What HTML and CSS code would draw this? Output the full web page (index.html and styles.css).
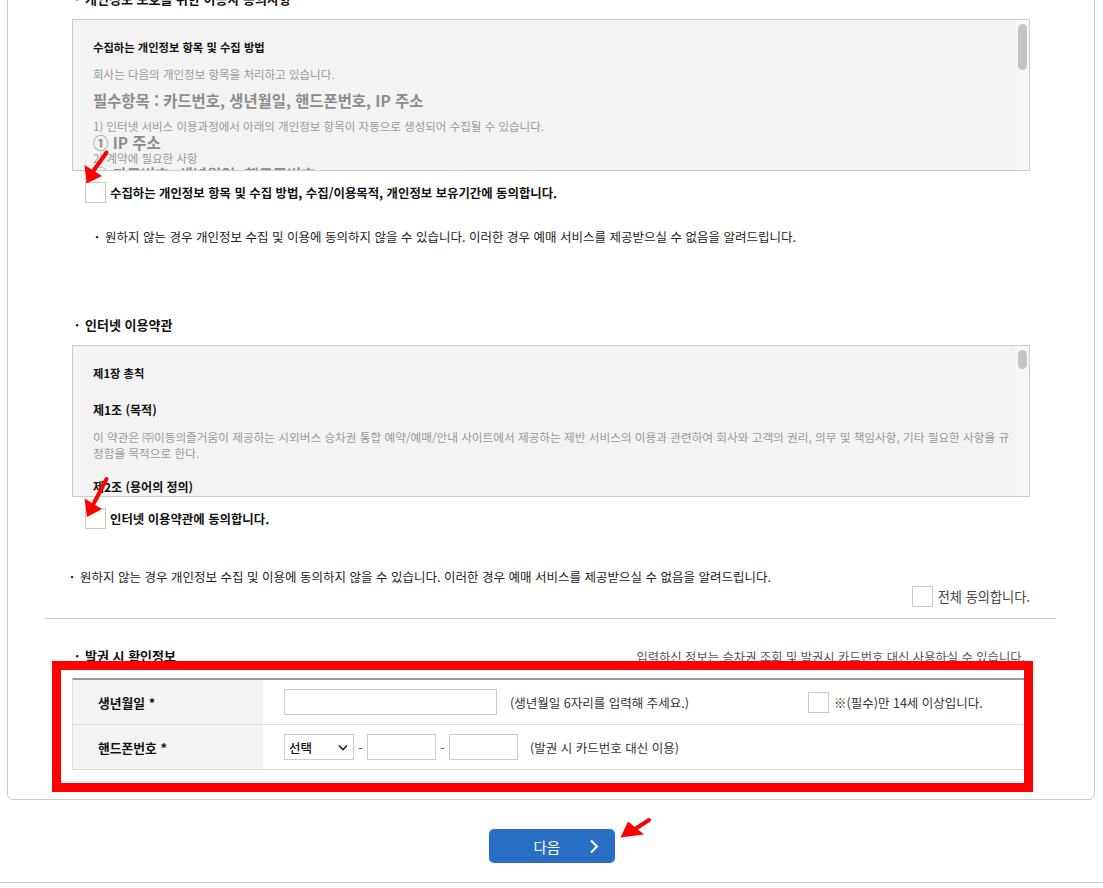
FILE: index.html
```html
<!DOCTYPE html>
<html lang="ko">
<head>
    <meta charset="UTF-8">
    <meta name="viewport" content="width=device-width, initial-scale=1.0">
    <link rel="stylesheet" href="styles.css">
    <title>약관 동의 및 발권 정보 입력</title>
</head>
<body>
    <div class="panel">
        <h3 class="sec-title"><span class="dot">·</span>개인정보 보호를 위한 이용자 동의사항</h3>

        <!-- 개인정보 수집 약관 -->
        <div class="terms-box">
            <div class="terms-text">
                <h4>수집하는 개인정보 항목 및 수집 방법</h4>
                <p class="first">회사는 다음의 개인정보 항목을 처리하고 있습니다.</p>
                <p class="big">필수항목 : 카드번호, 생년월일, 핸드폰번호, IP 주소</p>
                <p class="first-sm">1) 인터넷 서비스 이용과정에서 아래의 개인정보 항목이 자동으로 생성되어 수집될 수 있습니다.</p>
                <p class="item">① IP 주소</p>
                <p>2) 계약에 필요한 사항</p>
                <p class="item">② 카드번호, 생년월일, 핸드폰번호</p>
                <p>3) 수집방법 : 홈페이지 예매 화면</p>
            </div>
            <div class="scrollbar"><span class="thumb thumb-long"></span></div>
        </div>
        <div class="agree-row">
            <span class="chk-wrap">
                <span class="chk"></span>
                <svg class="arrow arrow-1" width="24" height="34" viewBox="0 0 24 34">
                    <path d="M2.5 32.5 L0.5 14 L18 25 Z" fill="#f00"/>
                    <path d="M10 19 L22.5 1.5" stroke="#f00" stroke-width="4" stroke-linecap="round"/>
                </svg>
            </span>
            <b>수집하는 개인정보 항목 및 수집 방법, 수집/이용목적, 개인정보 보유기간에 동의합니다.</b>
        </div>
        <p class="notice notice-1"><span class="dot">·</span>원하지 않는 경우 개인정보 수집 및 이용에 동의하지 않을 수 있습니다. 이러한 경우 예매 서비스를 제공받으실 수 없음을 알려드립니다.</p>

        <h3 class="sec-title terms-title"><span class="dot">·</span>인터넷 이용약관</h3>

        <!-- 인터넷 이용약관 -->
        <div class="terms-box">
            <div class="terms-text">
                <h4>제1장 총칙</h4>
                <h4 class="article">제1조 (목적)</h4>
                <p class="first article-text">이 약관은 ㈜이동의즐거움이 제공하는 시외버스 승차권 통합 예약/예매/안내 사이트에서 제공하는 제반 서비스의 이용과 관련하여 회사와 고객의 권리, 의무 및 책임사항, 기타 필요한 사항을 규정함을 목적으로 한다.</p>
                <h4 class="article article-2">제2조 (용어의 정의)</h4>
                <p>이 약관에서 사용하는 용어의 정의는 다음과 같다.</p>
            </div>
            <div class="scrollbar"><span class="thumb thumb-short"></span></div>
        </div>
        <div class="agree-row">
            <span class="chk-wrap">
                <span class="chk"></span>
                <svg class="arrow arrow-2" width="24" height="42" viewBox="0 0 24 42">
                    <path d="M3 40 L0.5 21.5 L18 32 Z" fill="#f00"/>
                    <path d="M10 26 L22.5 2" stroke="#f00" stroke-width="4" stroke-linecap="round"/>
                </svg>
            </span>
            <b>인터넷 이용약관에 동의합니다.</b>
        </div>
        <p class="notice notice-2"><span class="dot">·</span>원하지 않는 경우 개인정보 수집 및 이용에 동의하지 않을 수 있습니다. 이러한 경우 예매 서비스를 제공받으실 수 없음을 알려드립니다.</p>

        <div class="all-agree">
            <span class="chk"></span>
            <span>전체 동의합니다.</span>
        </div>

        <hr class="divider">

        <div class="sec-head">
            <h3 class="sec-title"><span class="dot">·</span>발권 시 확인정보</h3>
            <span class="sec-note">입력하신 정보는 승차권 조회 및 발권시 카드번호 대신 사용하실 수 있습니다.</span>
        </div>

        <!-- 발권 확인정보 입력 -->
        <div class="confirm-area">
            <div class="info-table">
                <div class="info-row">
                    <div class="info-label">생년월일 *</div>
                    <div class="info-field">
                        <input type="text" class="inp-birth">
                        <span class="hint hint-birth">(생년월일 6자리를 입력해 주세요.)</span>
                        <span class="chk"></span>
                        <span class="age-text">※(필수)만 14세 이상입니다.</span>
                    </div>
                </div>
                <div class="info-row">
                    <div class="info-label">핸드폰번호 *</div>
                    <div class="info-field">
                        <span class="select-wrap">
                            <select class="sel-phone">
                                <option>선택</option>
                                <option>010</option>
                                <option>011</option>
                                <option>016</option>
                                <option>017</option>
                                <option>019</option>
                            </select>
                            <svg class="sel-arrow" width="10" height="7" viewBox="0 0 10 7">
                                <polyline points="1,1.5 5,5.5 9,1.5" fill="none" stroke="#222" stroke-width="1.6"/>
                            </svg>
                        </span>
                        <span class="dash">-</span>
                        <input type="text" class="inp-phone">
                        <span class="dash">-</span>
                        <input type="text" class="inp-phone">
                        <span class="hint hint-phone">(발권 시 카드번호 대신 이용)</span>
                    </div>
                </div>
            </div>
            <div class="highlight"></div>
        </div>
    </div>

    <div class="btn-area">
        <a href="#" class="btn-next">
            <span>다음</span>
            <svg width="10" height="15" viewBox="0 0 10 15">
                <polyline points="2,1.5 8,7.5 2,13.5" fill="none" stroke="#fff" stroke-width="2"/>
            </svg>
        </a>
        <svg class="arrow arrow-3" width="32" height="22" viewBox="0 0 32 22">
            <path d="M1.5 19.5 L9 3.5 L25 16.5 Z" fill="#f00"/>
            <path d="M16 11 L30 2" stroke="#f00" stroke-width="4" stroke-linecap="round"/>
        </svg>
    </div>
    <div class="footer-line"></div>
</body>
</html>
```

FILE: styles.css
```css
* {
    box-sizing: border-box;
}
body {
    margin: 0;
    background-color: #fff;
    font-family: "Noto Sans CJK KR", "Noto Sans", sans-serif;
    font-size: 12.5px;
    color: #333;
}
p, h3, h4 {
    margin: 0;
}

/* 바깥 패널 */
.panel {
    margin: -40px 8px 0 7px;
    padding: 29px 0 29px;
    border: 1px solid #ccc;
    border-radius: 0 0 6px 6px;
}
.sec-title {
    padding-left: 67px;
    font-size: 13px;
    line-height: 18px;
    font-weight: bold;
    color: #111;
}
.dot {
    display: inline-block;
    width: 10px;
    font-weight: bold;
}

/* 약관 스크롤 박스 */
.terms-box {
    position: relative;
    height: 152px;
    margin: 11px 64px 0;
    border: 1px solid #ccc;
    background-color: #f3f3f3;
    overflow: hidden;
}
.terms-text {
    padding: 19px 16px 0 20px;
    font-size: 11.5px;
    line-height: 16px;
    color: #999;
}
.terms-text h4 {
    font-size: 11.3px;
    line-height: 16px;
    font-weight: bold;
    color: #111;
}
.terms-text h4.article {
    margin-top: 21px;
    font-size: 12px;
}
.terms-text h4.article-2 {
    margin-top: 18px;
}
.terms-text .first {
    margin-top: 11px;
}
.terms-text .article-text {
    font-size: 11.65px;
}
.terms-text .big {
    margin-top: 8px;
    font-size: 15.4px;
    line-height: 20px;
    font-weight: bold;
    color: #8c8c8c;
}
.terms-text .first-sm {
    margin-top: 8px;
}
.terms-text .item {
    font-size: 15.4px;
    font-weight: bold;
    color: #8c8c8c;
}
.scrollbar {
    position: absolute;
    top: 0;
    right: 0;
    bottom: 0;
    width: 14px;
    background-color: #f7f7f7;
}
.thumb {
    display: block;
    width: 9px;
    margin: 4px 0 0 3px;
    background-color: #c4c4c4;
    border-radius: 5px;
}
.thumb-long {
    height: 46px;
}
.thumb-short {
    height: 19px;
}

/* 체크박스 */
.chk {
    display: inline-block;
    width: 21px;
    height: 21px;
    border: 1px solid #c9c9c9;
    background-color: #fff;
    flex-shrink: 0;
}
.chk-wrap {
    position: relative;
    display: inline-flex;
}
.agree-row {
    display: flex;
    align-items: center;
    gap: 4px;
    margin: 11px 0 0 77px;
    font-size: 12.4px;
    color: #111;
}

/* 빨간 화살표 표시 */
.arrow {
    position: absolute;
    overflow: visible;
}
.arrow-1 {
    left: -1px;
    top: -31px;
}
.arrow-2 {
    left: -1px;
    top: -31px;
}
.arrow-3 {
    left: 130px;
    top: -11px;
}

.notice {
    line-height: 16px;
    color: #222;
}
.notice-1 {
    margin-top: 26px;
    padding-left: 87px;
}
.notice-2 {
    margin-top: 40px;
    padding-left: 62px;
}
.terms-title {
    margin-top: 71px;
}
.all-agree {
    display: flex;
    justify-content: flex-end;
    align-items: center;
    gap: 5px;
    margin: 1px 64px 0 0;
    font-size: 13.2px;
    color: #444;
}
.divider {
    margin: 11px 38px 0 37px;
    border: 0;
    border-top: 1px solid #ccc;
}

/* 발권 시 확인정보 */
.sec-head {
    display: flex;
    justify-content: space-between;
    align-items: flex-end;
    margin-top: 28px;
    padding-right: 69px;
}
.sec-note {
    font-size: 12.3px;
    line-height: 16px;
    color: #555;
}
.confirm-area {
    position: relative;
    margin: 13px 64px 0;
}
.info-table {
    border-top: 2px solid #9a9a9a;
    border-left: 1px solid #ddd;
}
.info-row {
    display: flex;
    height: 45px;
    border-bottom: 1px solid #ddd;
}
.info-label {
    display: flex;
    align-items: center;
    width: 190px;
    padding-left: 25px;
    background-color: #f3f3f3;
    font-size: 12.8px;
    font-weight: bold;
    color: #111;
}
.info-field {
    display: flex;
    align-items: center;
    flex: 1;
    padding-left: 21px;
    font-size: 12.5px;
    color: #333;
}
input[type="text"] {
    height: 26px;
    border: 1px solid #ccc;
    background-color: #fff;
    font-family: inherit;
    outline: none;
}
.inp-birth {
    width: 213px;
}
.inp-phone {
    width: 69px;
}
.hint {
    margin-left: 13px;
}
.hint-birth {
    width: 298px;
}
.hint-phone {
    margin-left: 12px;
}
.age-text {
    margin-left: 5px;
}
.dash {
    width: 13px;
    text-align: center;
    color: #555;
}
.select-wrap {
    position: relative;
    display: inline-flex;
}
.sel-phone {
    width: 70px;
    height: 26px;
    padding-left: 4px;
    border: 1px solid #ccc;
    background-color: #fff;
    font-family: inherit;
    font-size: 12.5px;
    font-weight: 500;
    color: #111;
    appearance: none;
    border-radius: 0;
    outline: none;
}
.sel-arrow {
    position: absolute;
    right: 6px;
    top: 10px;
    pointer-events: none;
}
.highlight {
    position: absolute;
    left: -20px;
    top: -17px;
    right: -3px;
    bottom: -22px;
    border: 9px solid #f00;
    pointer-events: none;
}

/* 다음 버튼 */
.btn-area {
    position: relative;
    width: 126px;
    margin: 29px auto 19px;
}
.btn-next {
    display: flex;
    align-items: center;
    height: 34px;
    padding: 0 16px 0 45px;
    border-radius: 5px;
    background-color: #2a6fc6;
    color: #fff;
    font-size: 14.5px;
    text-decoration: none;
}
.btn-next svg {
    margin-left: auto;
}
.footer-line {
    border-top: 1px solid #ccc;
}
```
